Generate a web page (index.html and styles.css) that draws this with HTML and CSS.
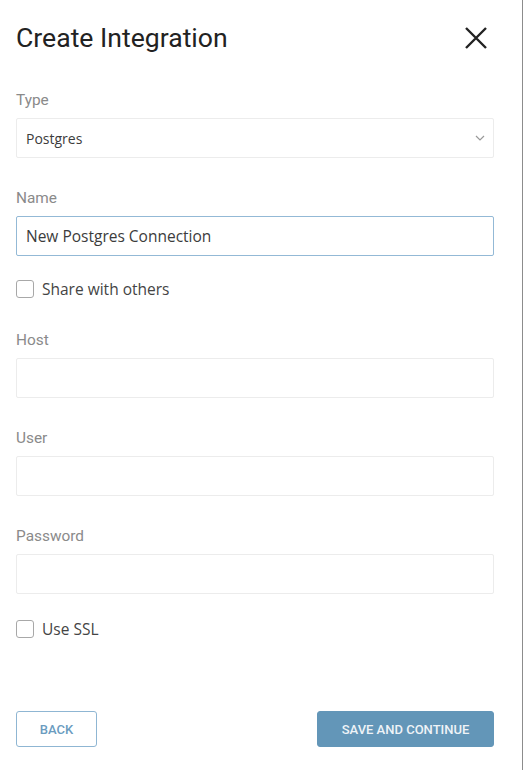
FILE: index.html
```html
<!DOCTYPE html>
<html>
<head>
<meta charset="utf-8">
<link rel="stylesheet" href="styles.css">
</head>
<body>
<div class="panel">
  <div class="header">
    <h1 class="title">Create Integration</h1>
    <button class="close" aria-label="Close">
      <svg width="24" height="24" viewBox="0 0 24 24"><path d="M2 2 L22 22 M22 2 L2 22" stroke="#222" stroke-width="2.4" fill="none"/></svg>
    </button>
  </div>

  <div class="field">
    <label class="label">Type</label>
    <div class="input select">
      <span>Postgres</span>
      <svg class="chev" width="10" height="6" viewBox="0 0 10 6"><path d="M1 1 L5 5 L9 1" stroke="#999" stroke-width="1.2" fill="none"/></svg>
    </div>
  </div>

  <div class="field">
    <label class="label">Name</label>
    <div class="input focused"><span>New Postgres Connection</span></div>
  </div>

  <div class="check first">
    <span class="box"></span><span class="check-text">Share with others</span>
  </div>

  <div class="field">
    <label class="label">Host</label>
    <div class="input"></div>
  </div>

  <div class="field">
    <label class="label">User</label>
    <div class="input"></div>
  </div>

  <div class="field">
    <label class="label">Password</label>
    <div class="input"></div>
  </div>

  <div class="check last">
    <span class="box"></span><span class="check-text">Use SSL</span>
  </div>

  <div class="actions">
    <button class="btn back">Back</button>
    <button class="btn primary">Save and Continue</button>
  </div>
</div>
</body>
</html>
```

FILE: styles.css
```css
html, body {
  margin: 0;
  padding: 0;
  background: #fff;
}
body {
  width: 524px;
  height: 770px;
  overflow: hidden;
}
.panel {
  box-sizing: border-box;
  width: 523px;
  height: 770px;
  border-right: 1px solid #8c8c8c;
  padding: 24px 28px 0 16px;
  display: flex;
  flex-direction: column;
}
.header {
  display: flex;
  align-items: center;
  justify-content: space-between;
  height: 28px;
  margin-bottom: 38px;
}
.title {
  margin: 0;
  font-family: Roboto, "Liberation Sans", sans-serif;
  font-weight: 400;
  font-size: 26.6px;
  line-height: 28px;
  color: #222;
}
.close {
  border: 0;
  background: none;
  padding: 0;
  margin-right: 6px;
  width: 24px;
  height: 24px;
  display: flex;
}
.field {
  display: flex;
  flex-direction: column;
  margin-bottom: 30px;
}
.label {
  font-family: Roboto, "Liberation Sans", sans-serif;
  font-size: 15.4px;
  line-height: 20px;
  color: #8a8a8a;
  margin-bottom: 8px;
}
.input {
  box-sizing: border-box;
  height: 40px;
  border: 1px solid #ececec;
  border-radius: 2px;
  display: flex;
  align-items: center;
  padding: 0 9px;
  font-family: "Open Sans", "Noto Sans", sans-serif;
  font-size: 15.5px;
  color: #3c3c3c;
}
.select {
  justify-content: space-between;
  padding-right: 8px;
  font-size: 14px;
}
.focused {
  border-color: #93b9d6;
}
.check {
  display: flex;
  align-items: center;
  height: 18px;
  font-family: "Open Sans", "Noto Sans", sans-serif;
  font-size: 15.5px;
  color: #444;
}
.check.first {
  margin-top: -6px;
  margin-bottom: 32px;
}
.check.last {
  margin-top: -4px;
}
.box {
  box-sizing: border-box;
  width: 18px;
  height: 18px;
  border: 1px solid #a8a8a8;
  border-radius: 3px;
  margin-right: 8px;
}
.actions {
  display: flex;
  justify-content: space-between;
  margin-top: 73px;
}
.btn {
  box-sizing: border-box;
  height: 36px;
  border-radius: 3px;
  font-family: Roboto, "Liberation Sans", sans-serif;
  font-weight: 500;
  font-size: 13px;
  text-transform: uppercase;
  cursor: pointer;
}
.back {
  width: 81px;
  background: #fff;
  border: 1px solid #8fb6d3;
  color: #6b9cbf;
}
.primary {
  width: 177px;
  background: #6396b8;
  border: 1px solid #6396b8;
  color: #eef3f7;
}
```
